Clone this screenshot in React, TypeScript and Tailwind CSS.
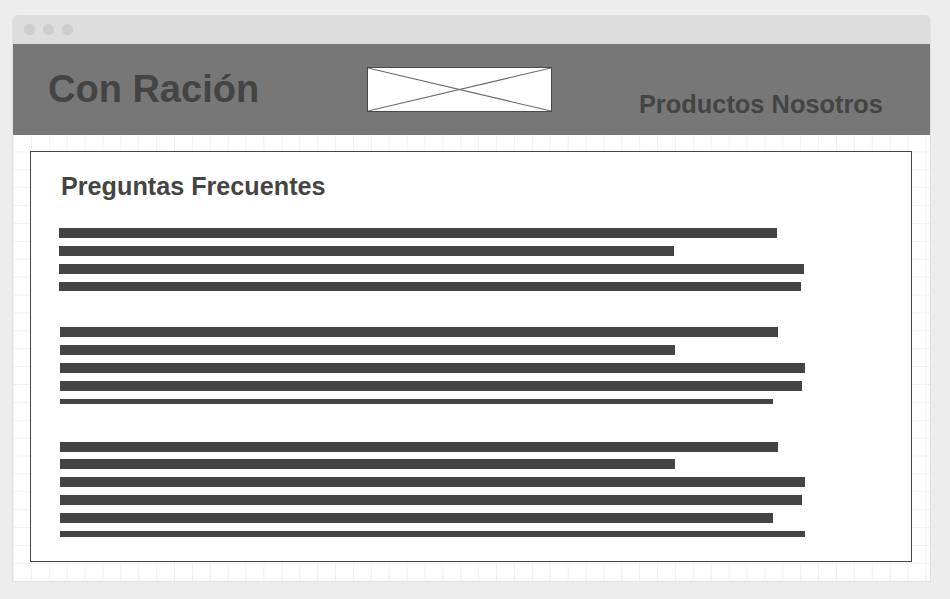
import React from 'react';

type Bar = { w: number; h: number; mt: number };

// FAQ blocks drawn as placeholder text bars
const groups: { ml: number; mt: number; bars: Bar[] }[] = [
  {
    ml: 0,
    mt: 29,
    bars: [
      { w: 718, h: 10, mt: 0 },
      { w: 615, h: 10, mt: 8 },
      { w: 745, h: 10, mt: 8 },
      { w: 742, h: 9, mt: 8 },
    ],
  },
  {
    ml: 1,
    mt: 36,
    bars: [
      { w: 718, h: 10, mt: 0 },
      { w: 615, h: 10, mt: 8 },
      { w: 745, h: 10, mt: 8 },
      { w: 742, h: 10, mt: 8 },
      { w: 713, h: 5, mt: 8 },
    ],
  },
  {
    ml: 1,
    mt: 38,
    bars: [
      { w: 718, h: 10, mt: 0 },
      { w: 615, h: 10, mt: 7 },
      { w: 745, h: 10, mt: 8 },
      { w: 742, h: 10, mt: 8 },
      { w: 713, h: 10, mt: 8 },
      { w: 745, h: 6, mt: 8 },
    ],
  },
];

function ImagePlaceholder() {
  return (
    <div className="w-[185px] h-[45px] border border-[#4a4a4a] bg-white">
      <svg width="100%" height="100%" viewBox="0 0 100 100" preserveAspectRatio="none">
        <line x1="0" y1="0" x2="100" y2="100" stroke="#666" strokeWidth="1" vectorEffect="non-scaling-stroke" />
        <line x1="100" y1="0" x2="0" y2="100" stroke="#666" strokeWidth="1" vectorEffect="non-scaling-stroke" />
      </svg>
    </div>
  );
}

export default function App() {
  return (
    <div className="w-[950px] h-[599px] bg-[#ededed] pt-[15px] pl-[12px] font-['Liberation_Sans',Arial,sans-serif] text-[#444]">
      <div className="w-[919px] h-[567px] flex flex-col border-x border-b border-[#e2e2e2] rounded-t-[6px] overflow-hidden">
        {/* title bar */}
        <div className="h-[29px] bg-[#dddddd] flex items-center pl-[11px] gap-[8px] shrink-0">
          <span className="w-[11px] h-[11px] rounded-full bg-[#cdcdcd]" />
          <span className="w-[11px] h-[11px] rounded-full bg-[#cdcdcd]" />
          <span className="w-[11px] h-[11px] rounded-full bg-[#cdcdcd]" />
        </div>

        {/* site header */}
        <div className="h-[91px] bg-[#777777] flex items-start pl-[35px] pr-[47px] shrink-0">
          <div className="w-[319px] mt-[26px] text-[38px] leading-none font-bold text-[#444]">Con Ración</div>
          <div className="mt-[23px]">
            <ImagePlaceholder />
          </div>
          <div className="ml-auto mt-[48px] text-[25.4px] leading-none font-bold text-[#444]">Productos Nosotros</div>
        </div>

        {/* canvas */}
        <div className="flex-1 bg-white bg-[linear-gradient(to_right,#f1f1f1_1px,transparent_1px),linear-gradient(to_bottom,#f1f1f1_1px,transparent_1px)] bg-[size:17.9px_17.9px] bg-[position:0px_16.4px] pt-[16px] pl-[17px]">
          <div className="w-[882px] h-[411px] border border-[#444] bg-white pt-[22px] pl-[28px]">
            <h1 className="ml-[2px] text-[25.2px] leading-none font-bold text-[#444]">Preguntas Frecuentes</h1>
            {groups.map((g, gi) => (
              <div key={gi} className="flex flex-col" style={{ marginTop: g.mt, marginLeft: g.ml }}>
                {g.bars.map((b, bi) => (
                  <div
                    key={bi}
                    className="bg-[#444]"
                    style={{ width: b.w, height: b.h, marginTop: b.mt }}
                  />
                ))}
              </div>
            ))}
          </div>
        </div>
      </div>
    </div>
  );
}
